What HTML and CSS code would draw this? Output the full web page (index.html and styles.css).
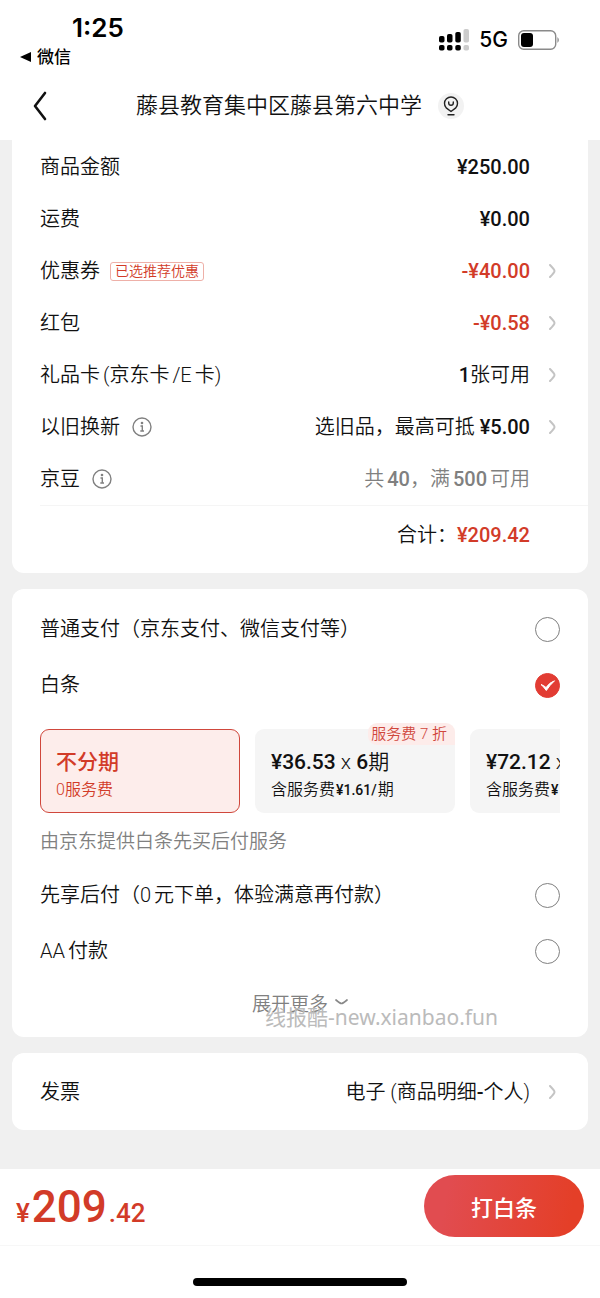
FILE: index.html
```html
<!DOCTYPE html>
<html lang="zh-CN">
<head>
    <meta charset="UTF-8">
    <meta name="viewport" content="width=device-width, initial-scale=1.0">
    <title>确认订单</title>
    <link rel="stylesheet" href="styles.css">
</head>
<body>

    <div class="status-bar">
        <div class="status-left">
            <div class="time">1:25</div>
            <a class="back-app" href="#">
                <svg width="11" height="10" viewBox="0 0 11 10"><path d="M0 5 L11 0 V10 Z" fill="#000"/></svg>
                微信
            </a>
        </div>
        <div class="status-right">
            <svg width="30" height="22" viewBox="0 0 30 22">
                <g fill="#000">
                    <rect x="0" y="7" width="5.500" height="6.500" rx="1.800"/>
                    <rect x="8" y="5" width="5.500" height="8.500" rx="1.800"/>
                    <rect x="16.300" y="3" width="5.500" height="10.500" rx="1.800"/>
                    <rect x="0" y="16" width="5.500" height="5.500" rx="1.800"/>
                    <rect x="8" y="16" width="5.500" height="5.500" rx="1.800"/>
                    <rect x="16.300" y="16" width="5.500" height="5.500" rx="1.800"/>
                </g>
                <g fill="#ccc">
                    <rect x="24.500" y="0" width="5.500" height="13.500" rx="1.800"/>
                    <rect x="24.500" y="16" width="5.500" height="5.500" rx="1.800"/>
                </g>
            </svg>
            <span class="network">5G</span>
            <svg width="42" height="20" viewBox="0 0 42 20">
                <rect x="0.700" y="0.700" width="37" height="18.600" rx="5" fill="none" stroke="#8a8a8a" stroke-width="1.400"/>
                <rect x="3" y="3" width="12" height="14" rx="3" fill="#000"/>
                <path d="M39.500 7 Q42 10 39.500 13 Z" fill="#777"/>
            </svg>
        </div>
    </div>

    <header class="nav">
        <button class="nav-back" aria-label="返回">
            <svg width="14" height="30" viewBox="0 0 14 30"><path d="M12 2 L2 15 L12 28" fill="none" stroke="#111" stroke-width="2.600" stroke-linecap="round" stroke-linejoin="round"/></svg>
        </button>
        <h1>藤县教育集中区藤县第六中学</h1>
        <button class="nav-pin" aria-label="地址">
            <svg width="16" height="20" viewBox="0 0 16 20" fill="none" stroke="#222" stroke-width="1.400" stroke-linecap="round">
                <path d="M8 15.500 L3.200 11.900 A6.500 6.500 0 1 1 12.800 11.900 Z" stroke-linejoin="round"/>
                <path d="M5.700 6 V7 A2.300 2.300 0 0 0 10.300 7 V6"/>
                <path d="M5 18.800 H11"/>
            </svg>
        </button>
    </header>

    <main>
        <section class="card amounts">
            <div class="row">
                <span>商品金额</span>
                <span class="value"><b>¥250.00</b></span>
            </div>
            <div class="row">
                <span>运费</span>
                <span class="value"><b>¥0.00</b></span>
            </div>
            <div class="row">
                <span>优惠券</span><span class="tag">已选推荐优惠</span>
                <span class="value red"><b>-¥40.00</b></span>
                <svg class="arrow" viewBox="0 0 7 14"><path d="M1 1 Q5.500 5.500 5.500 7 Q5.500 8.500 1 13"/></svg>
            </div>
            <div class="row">
                <span>红包</span>
                <span class="value red"><b>-¥0.58</b></span>
                <svg class="arrow" viewBox="0 0 7 14"><path d="M1 1 Q5.500 5.500 5.500 7 Q5.500 8.500 1 13"/></svg>
            </div>
            <div class="row">
                <span>礼品卡<i>(京东卡</i><i>/E</i><i>卡)</i></span>
                <span class="value"><b>1</b>张可用</span>
                <svg class="arrow" viewBox="0 0 7 14"><path d="M1 1 Q5.500 5.500 5.500 7 Q5.500 8.500 1 13"/></svg>
            </div>
            <div class="row">
                <span>以旧换新</span>
                <svg class="info" viewBox="0 0 20 20"><circle cx="10" cy="10" r="9"/><path d="M8.500 9 H10.300 V14 M8.300 14 H12"/><circle class="dot" cx="10" cy="6" r="1.300"/></svg>
                <span class="value">选旧品，最高可抵 <b>¥5.00</b></span>
                <svg class="arrow" viewBox="0 0 7 14"><path d="M1 1 Q5.500 5.500 5.500 7 Q5.500 8.500 1 13"/></svg>
            </div>
            <div class="row">
                <span>京豆</span>
                <svg class="info" viewBox="0 0 20 20"><circle cx="10" cy="10" r="9"/><path d="M8.500 9 H10.300 V14 M8.300 14 H12"/><circle class="dot" cx="10" cy="6" r="1.300"/></svg>
                <span class="value gray">共<i><b>40</b></i>，满<i><b>500</b></i><i>可用</i></span>
            </div>
            <div class="row total">
                <span class="value">合计：<b class="red">¥209.42</b></span>
            </div>
        </section>

        <section class="card payment">
            <label class="pay-row">
                <span>普通支付（京东支付、微信支付等）</span>
                <input type="radio" name="pay">
            </label>
            <label class="pay-row">
                <span>白条</span>
                <span class="radio-checked">
                    <input type="radio" name="pay" checked>
                    <svg width="25" height="25" viewBox="0 0 25 25"><path d="M6 11.500 Q9 12.500 11 14.500 Q14.500 9.500 19.500 7.800 Q14.500 12.500 11.300 17.500 Q9 14 6 11.500 Z" fill="#fff" stroke="#fff" stroke-width="1" stroke-linejoin="round"/></svg>
                </span>
            </label>

            <div class="plans">
                <button class="plan active">
                    <span class="plan-title">不分期</span>
                    <span class="plan-fee">0服务费</span>
                </button>
                <button class="plan">
                    <span class="plan-badge">服务费 7 折</span>
                    <span class="plan-title"><b>¥36.53</b> x <b>6</b>期</span>
                    <span class="plan-fee">含服务费<b>¥1.61/</b>期</span>
                </button>
                <button class="plan">
                    <span class="plan-title"><b>¥72.12</b> x</span>
                    <span class="plan-fee">含服务费<b>¥</b></span>
                </button>
            </div>
            <p class="note">由京东提供白条先买后付服务</p>

            <label class="pay-row">
                <span>先享后付（0<i>元下单，体验满意再付款）</i></span>
                <input type="radio" name="pay">
            </label>
            <label class="pay-row">
                <span>AA<i>付款</i></span>
                <input type="radio" name="pay">
            </label>
            <button class="more">
                展开更多
                <svg width="13" height="6" viewBox="0 0 13 6"><path d="M1 1 Q5 4.500 6.500 4.500 Q8 4.500 12 1" fill="none" stroke="#888" stroke-width="1.700" stroke-linecap="round"/></svg>
            </button>
            <div class="watermark">线报酷-new.xianbao.fun</div>
        </section>

        <section class="card invoice">
            <div class="row">
                <span>发票</span>
                <span class="value">电子 (商品明细<b>-</b>个人)</span>
                <svg class="arrow" viewBox="0 0 7 14"><path d="M1 1 Q5.500 5.500 5.500 7 Q5.500 8.500 1 13"/></svg>
            </div>
        </section>
    </main>

    <footer>
        <div class="submit-bar">
            <div class="price">¥<strong>209</strong>.42</div>
            <button class="submit-btn">打白条</button>
        </div>
        <div class="home-indicator"></div>
    </footer>

</body>
</html>
```

FILE: styles.css
```css
* {
    box-sizing: border-box;
}

body {
    font-family: Roboto, "Noto Sans CJK SC", sans-serif;
    font-size: 20px;
    font-weight: 350;
    line-height: 28px;
    margin: 0;
    min-height: 100vh;
    display: flex;
    flex-direction: column;
    background-color: #f0f0f0;
    color: #111;
}

button {
    font-family: inherit;
    font-weight: inherit;
    color: inherit;
    border: none;
    padding: 0;
    background: none;
    cursor: pointer;
}

svg {
    display: block;
    flex-shrink: 0;
}

b {
    font-weight: 500;
}

/* thin gap between Chinese text and latin or digits */
i {
    margin-left: 3px;
    font-style: normal;
}

.red {
    color: #d23b28;
}

.gray {
    color: #808080;
}

/* Status bar */
.status-bar {
    display: flex;
    justify-content: space-between;
    align-items: flex-start;
    height: 72px;
    padding: 12px 40px 0 20px;
    background-color: #fff;
    color: #000;
}

.time {
    padding-left: 52px;
    font-family: Inter, sans-serif;
    font-size: 26px;
    font-weight: 600;
    line-height: 32px;
}

.back-app {
    display: flex;
    align-items: center;
    gap: 6px;
    font-size: 17px;
    font-weight: 500;
    line-height: 26px;
    color: #000;
    text-decoration: none;
}

.status-right {
    display: flex;
    align-items: center;
    gap: 10px;
    padding-top: 14px;
}

.network {
    font-family: Inter, sans-serif;
    font-size: 21px;
    font-weight: 500;
}

/* Title */
.nav {
    display: flex;
    justify-content: center;
    align-items: center;
    position: relative;
    height: 68px;
    background-color: #fff;
}

.nav h1 {
    margin: 0;
    font-size: 22px;
    font-weight: 350;
}

.nav-back {
    position: absolute;
    left: 33px;
    top: 19px;
}

.nav-pin {
    display: flex;
    justify-content: center;
    align-items: center;
    width: 26px;
    height: 26px;
    margin-left: 16px;
    border-radius: 50%;
    background-color: #f2f2f2;
}

main {
    flex: 1;
    display: flex;
    flex-direction: column;
    gap: 16px;
    padding: 0 12px 38px;
}

.card {
    position: relative;
    padding: 0 28px;
    background-color: #fff;
    border-radius: 12px;
}

/* Amount list */
.amounts {
    padding-top: 1px;
    padding-bottom: 10px;
    border-radius: 0 0 12px 12px;
}

.row {
    display: flex;
    align-items: center;
    height: 52px;
}

.value {
    margin-left: auto;
    margin-right: 30px;
}

.arrow {
    width: 7px;
    height: 14px;
    margin-left: -11px;
    margin-right: 4px;
    fill: none;
    stroke: #c4c4c4;
    stroke-width: 2;
    stroke-linecap: round;
}

.tag {
    margin-left: 10px;
    padding: 0 4px;
    border: 1px solid #eeb0a8;
    border-radius: 3px;
    font-size: 14px;
    line-height: 17px;
    color: #d23b28;
}

.info {
    width: 20px;
    height: 20px;
    margin-left: 12px;
    fill: none;
    stroke: #808080;
    stroke-width: 1.4;
}

.info .dot {
    fill: #808080;
    stroke: none;
}

.total {
    height: 58px;
    margin-right: -28px;
    padding-right: 28px;
    border-top: 1px solid #f5f5f5;
}

/* Payment methods */
.payment {
    padding-top: 12px;
    padding-bottom: 12px;
}

.pay-row {
    display: flex;
    justify-content: space-between;
    align-items: center;
    height: 56px;
}

.pay-row input {
    appearance: none;
    width: 25px;
    height: 25px;
    margin: 0;
    border: 1px solid #808080;
    border-radius: 50%;
}

.pay-row input:checked {
    border-color: #e23c33;
    background-color: #e23c33;
}

.radio-checked {
    display: grid;
}

.radio-checked > * {
    grid-area: 1 / 1;
    pointer-events: none;
}

.plans {
    display: flex;
    gap: 15px;
    margin-top: 10px;
    padding-top: 6px;
    overflow: hidden;
}

.plan {
    position: relative;
    display: flex;
    flex-direction: column;
    flex: 0 0 200px;
    height: 84px;
    padding: 18px 16px 0;
    border-radius: 9px;
    background-color: #f5f5f5;
    text-align: left;
    white-space: nowrap;
}

.plan.active {
    padding: 17px 15px 0;
    border: 1px solid #d0473c;
    background-color: #fdedeb;
    color: #d23b28;
}

.plan-title {
    font-size: 21px;
    line-height: 30px;
}

.active .plan-title {
    font-weight: 500;
}

.plan-fee {
    font-size: 16px;
    line-height: 25px;
}

.plan-fee b {
    margin: 0 1px;
    font-size: 14px;
}

.plan-badge {
    position: absolute;
    right: 0;
    top: -6px;
    padding: 0 8px 0 3px;
    border-radius: 9px 9px 0 9px;
    background-color: #fdecea;
    font-size: 15px;
    line-height: 22px;
    color: #d0473c;
}

.note {
    margin: 0;
    padding-top: 4px;
    font-size: 19px;
    line-height: 50px;
    color: #808080;
}

.more {
    display: flex;
    justify-content: center;
    align-items: center;
    gap: 7px;
    width: 100%;
    height: 46px;
    font-size: 19px;
    color: #808080;
}

.watermark {
    position: absolute;
    right: 90px;
    bottom: 6px;
    font-family: "Noto Sans", "Noto Sans CJK SC", sans-serif;
    font-size: 21px;
    font-weight: 400;
    color: #bbb;
}

.invoice .row {
    height: 77px;
}

/* Bottom bar */
footer {
    height: 129px;
    background-color: #fff;
}

.submit-bar {
    display: flex;
    justify-content: space-between;
    align-items: center;
    height: 77px;
    padding: 0 16px 2px;
    border-bottom: 1px solid #f7f7f7;
}

.price {
    padding-top: 8px;
    font-size: 26px;
    font-weight: 500;
    line-height: 60px;
    color: #d23b28;
}

.price strong {
    margin: 0 2px;
    font-size: 44px;
    font-weight: 500;
}

.submit-btn {
    width: 160px;
    height: 62px;
    border-radius: 31px;
    background: linear-gradient(100deg, #e14c50 15%, #e43f28 90%);
    font-size: 22px;
    font-weight: 500;
    color: #fff;
}

.home-indicator {
    width: 214px;
    height: 8px;
    margin: 32px auto 0;
    border-radius: 4px;
    background-color: #000;
}
```
